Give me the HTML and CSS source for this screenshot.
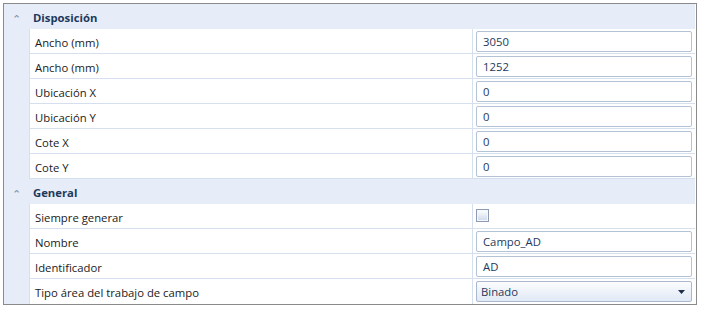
FILE: index.html
```html
<!DOCTYPE html>
<html lang="es">
<head>
<meta charset="UTF-8">
<title>Propiedades</title>
<link rel="stylesheet" href="styles.css">
</head>
<body>
<div class="grid">
    <!-- Disposición -->
    <div class="category">
        <span class="toggle">&#8963;</span>
        <span class="category-name">Disposición</span>
    </div>
    <div class="row">
        <div class="gutter"></div>
        <div class="label">Ancho (mm)</div>
        <div class="value"><div class="textbox">3050</div></div>
    </div>
    <div class="row">
        <div class="gutter"></div>
        <div class="label">Ancho (mm)</div>
        <div class="value"><div class="textbox">1252</div></div>
    </div>
    <div class="row">
        <div class="gutter"></div>
        <div class="label">Ubicación X</div>
        <div class="value"><div class="textbox">0</div></div>
    </div>
    <div class="row">
        <div class="gutter"></div>
        <div class="label">Ubicación Y</div>
        <div class="value"><div class="textbox">0</div></div>
    </div>
    <div class="row">
        <div class="gutter"></div>
        <div class="label">Cote X</div>
        <div class="value"><div class="textbox">0</div></div>
    </div>
    <div class="row">
        <div class="gutter"></div>
        <div class="label">Cote Y</div>
        <div class="value"><div class="textbox">0</div></div>
    </div>

    <!-- General -->
    <div class="category">
        <span class="toggle">&#8963;</span>
        <span class="category-name">General</span>
    </div>
    <div class="row">
        <div class="gutter"></div>
        <div class="label">Siempre generar</div>
        <div class="value"><span class="checkbox"></span></div>
    </div>
    <div class="row">
        <div class="gutter"></div>
        <div class="label">Nombre</div>
        <div class="value"><div class="textbox">Campo_AD</div></div>
    </div>
    <div class="row">
        <div class="gutter"></div>
        <div class="label">Identificador</div>
        <div class="value"><div class="textbox">AD</div></div>
    </div>
    <div class="row last">
        <div class="gutter"></div>
        <div class="label">Tipo área del trabajo de campo</div>
        <div class="value">
            <div class="combo">
                <span>Binado</span>
                <svg class="arrow" width="7" height="4" viewBox="0 0 7 4"><path d="M0 0h7L3.5 4z" fill="#1e2f4a"/></svg>
            </div>
        </div>
    </div>
</div>
</body>
</html>
```

FILE: styles.css
```css
body {
    margin: 0;
    background: #ffffff;
    font-family: "Open Sans", "Noto Sans", sans-serif;
    font-size: 11.3px;
    color: #1a1a1a;
}

.grid {
    margin: 3px 0 0 3px;
    width: 691px;
    border: 1px solid #8a8a8a;
    padding-right: 1px;
    background: #ffffff;
}

/* Category header */
.category {
    display: flex;
    align-items: center;
    height: 25px;
    background: #e6edf8;
}

.toggle {
    width: 25px;
    text-align: center;
    color: #7d8ea8;
    font-size: 11px;
    line-height: 25px;
    padding-top: 4px;
}

.category-name {
    font-weight: bold;
    color: #1e395b;
    padding: 1px 0 0 4px;
}

/* Property rows */
.row {
    display: flex;
    height: 25px;
}

.gutter {
    width: 25px;
    background: #e6edf8;
}

.label {
    width: 443px;
    padding: 2px 0 0 5px;
    line-height: 23px;
    border-left: 1px solid #d5dfee;
    border-bottom: 1px solid #d5dfee;
    box-sizing: border-box;
    white-space: nowrap;
}

.value {
    flex: 1;
    display: flex;
    align-items: center;
    padding: 0 3px 0 3px;
    border-left: 1px solid #d5dfee;
    border-bottom: 1px solid #d5dfee;
}

.row.last .label,
.row.last .value {
    border-bottom: none;
}

.textbox {
    flex: 1;
    height: 19px;
    line-height: 20px;
    padding-left: 6px;
    border: 1px solid #b4c2d6;
    border-radius: 2px;
    color: #1e395b;
}

.checkbox {
    width: 11px;
    height: 11px;
    margin: 0 0 1px 0;
    border: 1px solid #8e9bb3;
    background: linear-gradient(#ffffff, #cdd8ea);
    box-shadow: inset 0 0 0 1px #f4f7fb;
}

.combo {
    flex: 1;
    display: flex;
    align-items: center;
    justify-content: space-between;
    height: 19px;
    line-height: 20px;
    padding: 0 6px 0 4px;
    border: 1px solid #a9b8cd;
    border-radius: 2px;
    background: linear-gradient(#fbfcfe, #e1e9f5);
    color: #1e395b;
}
```
